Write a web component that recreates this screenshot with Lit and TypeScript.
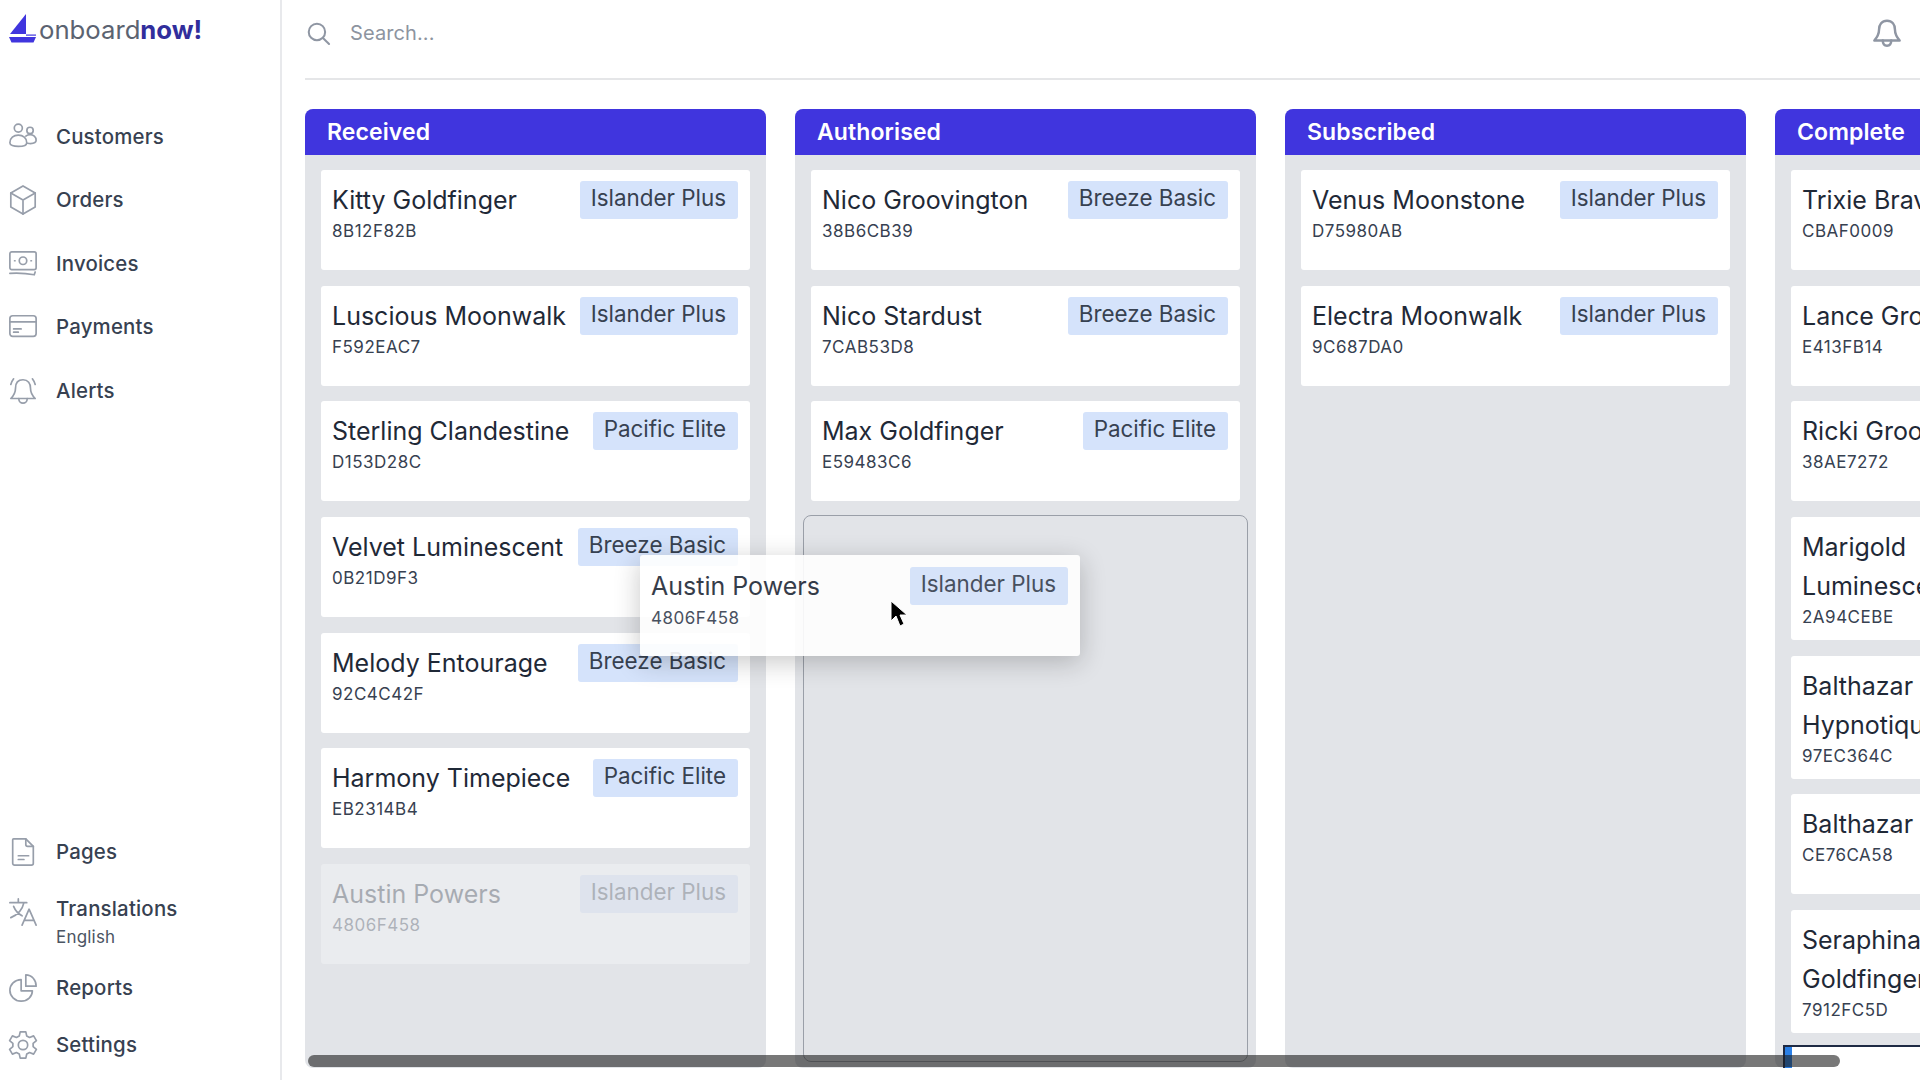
import { LitElement, html, css, svg } from 'lit';
import { customElement } from 'lit/decorators.js';

interface Card {
  name: string;
  id: string;
  plan: string;
  ghost?: boolean;
}

interface Column {
  title: string;
  cards: Card[];
  dropzone?: boolean;
}

const ISLANDER = 'Islander Plus';
const BREEZE = 'Breeze Basic';
const PACIFIC = 'Pacific Elite';

const COLUMNS: Column[] = [
  {
    title: 'Received',
    cards: [
      { name: 'Kitty Goldfinger', id: '8B12F82B', plan: ISLANDER },
      { name: 'Luscious Moonwalk', id: 'F592EAC7', plan: ISLANDER },
      { name: 'Sterling Clandestine', id: 'D153D28C', plan: PACIFIC },
      { name: 'Velvet Luminescent', id: '0B21D9F3', plan: BREEZE },
      { name: 'Melody Entourage', id: '92C4C42F', plan: BREEZE },
      { name: 'Harmony Timepiece', id: 'EB2314B4', plan: PACIFIC },
      { name: 'Austin Powers', id: '4806F458', plan: ISLANDER, ghost: true },
    ],
  },
  {
    title: 'Authorised',
    dropzone: true,
    cards: [
      { name: 'Nico Groovington', id: '38B6CB39', plan: BREEZE },
      { name: 'Nico Stardust', id: '7CAB53D8', plan: BREEZE },
      { name: 'Max Goldfinger', id: 'E59483C6', plan: PACIFIC },
    ],
  },
  {
    title: 'Subscribed',
    cards: [
      { name: 'Venus Moonstone', id: 'D75980AB', plan: ISLANDER },
      { name: 'Electra Moonwalk', id: '9C687DA0', plan: ISLANDER },
    ],
  },
  {
    title: 'Complete',
    cards: [
      { name: 'Trixie Bravo', id: 'CBAF0009', plan: ISLANDER },
      { name: 'Lance Groovington', id: 'E413FB14', plan: ISLANDER },
      { name: 'Ricki Groovington', id: '38AE7272', plan: ISLANDER },
      { name: 'Marigold Luminescent', id: '2A94CEBE', plan: ISLANDER },
      { name: 'Balthazar Hypnotique', id: '97EC364C', plan: ISLANDER },
      { name: 'Balthazar Bravo', id: 'CE76CA58', plan: ISLANDER },
      { name: 'Seraphina Goldfinger', id: '7912FC5D', plan: ISLANDER },
    ],
  },
];

const ICONS = {
  customers: svg`<circle cx="11" cy="6.5" r="4.3"/><circle cx="23.5" cy="9" r="3.4"/><path d="M2 22c0-5 4-8 9-8s9 3 9 8c0 3-4 4-9 4s-9-1-9-4z"/><path d="M19 15c1.300-1 3-1.500 4.500-1.500 3.500 0 6.500 2.500 6.500 6 0 2.500-2.500 3.500-6 3.500-1 0-2-.1-3-.3"/>`,
  orders: svg`<path d="M16 1l13 7.500v15L16 31 3 23.500v-15z"/><path d="M3 8.500l13 7.500 13-7.500M16 16v15"/>`,
  invoices: svg`<rect x="2" y="3" width="28" height="19" rx="2"/><circle cx="16" cy="12.500" r="4"/><path d="M7 12.500h.5M24.500 12.500h.5M2 26c8-.5 18 0 26 1.500l1-3"/>`,
  payments: svg`<rect x="2" y="4" width="28" height="22" rx="3"/><path d="M2 10.500h28M6 18h8M6 21.500h5"/>`,
  alerts: svg`<path d="M16 4c-5.500 0-8 4-8 9 0 5-2 8-5 11h26c-3-3-5-6-5-11 0-5-2.500-9-8-9z"/><path d="M11.500 24c0 3 2 5 4.500 5s4.500-2 4.500-5M3 9c.5-2 1.500-4 3-6M29 9c-.5-2-1.500-4-3-6"/>`,
  pages: svg`<path d="M6 2h13l8 8v18a2 2 0 0 1-2 2H7a2 2 0 0 1-2-2V3a1 1 0 0 1 1-1z"/><path d="M19 2v6a2 2 0 0 0 2 2h6M11 20h11M11 24h6"/>`,
  translations: svg`<path d="M2 6h18M11 2v4M17 6c-1.500 7-6.500 13-14 16M6 10c2 5 5 8 9 10"/><path d="M15 30l7.500-17L30 30M17.500 25h10"/>`,
  reports: svg`<path d="M14 7C7 7 2 12.500 2 18.500S7 30 14 30s12-5 12-11H14z"/><path d="M19 2v12h11C30 7.500 25.500 2 19 2z"/>`,
  settings: svg`<circle cx="16" cy="16" r="5"/><path d="M13 2h6l1 4.500 3 1.500 4.300-1.700 3 5-3.500 3v3.400l3.500 3-3 5-4.300-1.700-3 1.500-1 4.500h-6l-1-4.500-3-1.500-4.300 1.700-3-5 3.500-3v-3.400l-3.500-3 3-5L9 8l3-1.500z"/>`,
  bell: svg`<path d="M16 3c-5.500 0-8.500 4-8.500 9.500 0 5-2 8-5 11.500h27c-3-3.500-5-6.500-5-11.500C24.500 7 21.500 3 16 3z"/><path d="M11.500 24c0 3.500 2 5.500 4.500 5.500s4.500-2 4.500-5.500"/>`,
  search: svg`<circle cx="14" cy="14" r="10.500"/><path d="M22 22l7.500 7.500"/>`,
};

@customElement('app-root')
export class AppRoot extends LitElement {
  static styles = css`
    :host {
      display: block;
      width: 1920px;
      height: 1080px;
      overflow: hidden;
      position: relative;
      background: #fff;
      font-family: Inter, 'Liberation Sans', sans-serif;
      color: #1f2937;
    }
    .shell {
      display: flex;
      height: 100%;
    }

    /* sidebar */
    .sidebar {
      width: 282px;
      flex: none;
      box-sizing: border-box;
      border-right: 2px solid #e8e9ec;
      display: flex;
      flex-direction: column;
      padding: 13px 0 0 8px;
    }
    .logo {
      display: flex;
      align-items: center;
      height: 32px;
      font-size: 25.700px;
      color: #5b6371;
    }
    .logo svg {
      width: 30px;
      height: 32px;
      flex: none;
      margin-right: 1px;
    }
    .logo b {
      font-weight: 700;
      color: #312e9c;
    }
    .nav {
      display: flex;
      flex-direction: column;
    }
    .nav.top {
      margin-top: 60px;
    }
    .nav.bottom {
      margin-top: auto;
      padding-bottom: 6px;
    }
    .item {
      display: flex;
      align-items: center;
      height: 63.500px;
    }
    .nav.bottom .item {
      height: 57.500px;
    }
    .item svg {
      width: 30px;
      height: 30px;
      flex: none;
      fill: none;
      stroke: #979eaa;
      stroke-width: 1.800;
      stroke-linecap: round;
      stroke-linejoin: round;
    }
    .item span {
      margin-left: 18px;
      font-size: 20.400px;
      line-height: 24px;
      font-weight: 500;
      color: #374151;
      letter-spacing: 0.2px;
    }
    .nav.bottom .item.sub {
      height: 78px;
      align-items: flex-start;
      padding-top: 16px;
      box-sizing: border-box;
    }
    .item.sub div {
      margin-left: 18px;
    }
    .item.sub span {
      display: block;
      margin: 0;
    }
    .item.sub small {
      display: block;
      margin-top: 6px;
      font-size: 17px;
      line-height: 20px;
      color: #4b5563;
      letter-spacing: 0.2px;
    }

    /* main */
    .main {
      flex: 1;
      min-width: 0;
      padding-left: 23px;
      overflow: hidden;
    }
    .topbar {
      height: 80px;
      box-sizing: border-box;
      border-bottom: 2px solid #e5e6e8;
      display: flex;
      align-items: center;
      padding: 0 18px 12px 1px;
    }
    .topbar svg {
      flex: none;
      fill: none;
      stroke: #8f96a3;
      stroke-width: 2.600;
      stroke-linecap: round;
      stroke-linejoin: round;
    }
    .topbar .search-icon {
      width: 25px;
      height: 25px;
    }
    .topbar .bell {
      width: 30px;
      height: 30px;
    }
    .search {
      flex: 1;
      margin-left: 19px;
      font-size: 20px;
      color: #8d94a0;
      letter-spacing: 0.1px;
    }
    .board {
      display: flex;
      gap: 29px;
      margin-top: 29px;
      height: 959px;
      width: 1800px;
    }
    .column {
      width: 461px;
      flex: none;
      background: #e2e4e8;
      border-radius: 8px;
      display: flex;
      flex-direction: column;
      overflow: hidden;
    }
    .head {
      height: 46px;
      flex: none;
      background: #4035de;
      color: #fff;
      font-size: 23px;
      font-weight: 600;
      line-height: 46px;
      padding-left: 22px;
      letter-spacing: 0.1px;
    }
    .cards {
      display: flex;
      flex-direction: column;
      gap: 15.700px;
      padding: 15px 16px 0;
    }
    .card {
      background: #fff;
      border-radius: 3px;
      padding: 11px 12px 12px 11px;
      display: flex;
      justify-content: space-between;
      align-items: flex-start;
      gap: 8px;
      min-height: 100px;
      box-sizing: border-box;
      flex: none;
    }
    .card.ghost {
      opacity: 0.3;
    }
    .name {
      font-size: 25px;
      line-height: 39px;
      color: #1f2937;
    }
    .id {
      font-size: 17px;
      line-height: 21px;
      margin-top: 1px;
      color: #374151;
      letter-spacing: 0.5px;
    }
    .badge {
      flex: none;
      height: 38px;
      line-height: 34px;
      padding: 0 12px 0 11px;
      background: #d5e3fb;
      border-radius: 3px;
      font-size: 22.400px;
      color: #374151;
    }
    .dropzone {
      margin: 14px 8px 6px;
      flex: 1;
      border: 1.500px solid #9a9fa8;
      border-radius: 8px;
    }

    /* overlays */
    .dragged {
      position: absolute;
      left: 640px;
      top: 555px;
      width: 440px;
      min-height: 101px;
      padding-top: 12px;
      opacity: 0.9;
      box-shadow: 0 6px 26px rgba(0, 0, 0, 0.24);
    }
    .dragged .id {
      margin-top: 2px;
    }
    .cursor {
      position: absolute;
      left: 890px;
      top: 600px;
      width: 18px;
      height: 28px;
    }
    .clipped {
      position: absolute;
      left: 1783px;
      top: 1045px;
      width: 137px;
      height: 23px;
      box-sizing: border-box;
      background: #fff;
      border-top: 2px solid #1e2a44;
    }
    .clipped i {
      display: block;
      width: 7px;
      height: 100%;
      background: #2a7fe6;
      border-left: 2px solid #1e2a44;
    }
    .scrollbar {
      position: absolute;
      left: 308px;
      top: 1055px;
      width: 1532px;
      height: 12px;
      border-radius: 6px;
      background: rgba(30, 30, 30, 0.6);
    }
  `;

  private renderCard(card: Card, dragged = false) {
    const cls = `card${card.ghost ? ' ghost' : ''}${dragged ? ' dragged' : ''}`;
    return html`<div class=${cls}>
      <div>
        <div class="name">${card.name}</div>
        <div class="id">${card.id}</div>
      </div>
      <div class="badge">${card.plan}</div>
    </div>`;
  }

  private navItem(icon: keyof typeof ICONS, label: string) {
    return html`<div class="item">
      <svg viewBox="0 0 32 32">${ICONS[icon]}</svg>
      <span>${label}</span>
    </div>`;
  }

  render() {
    return html`<div class="shell">
        <aside class="sidebar">
          <div class="logo">
            <svg viewBox="0 0 30 32">
              <path d="M2 21L18 1v20z" fill="#4035de" />
              <path d="M18 21.500h10v1.200H18z" fill="#4035de" />
              <path d="M1 24h27l-2.500 5.500h-22z" fill="#4035de" />
            </svg>
            <span>onboard<b>now!</b></span>
          </div>
          <nav class="nav top">
            ${this.navItem('customers', 'Customers')} ${this.navItem('orders', 'Orders')}
            ${this.navItem('invoices', 'Invoices')} ${this.navItem('payments', 'Payments')}
            ${this.navItem('alerts', 'Alerts')}
          </nav>
          <nav class="nav bottom">
            ${this.navItem('pages', 'Pages')}
            <div class="item sub">
              <svg viewBox="0 0 32 32">${ICONS.translations}</svg>
              <div><span>Translations</span><small>English</small></div>
            </div>
            ${this.navItem('reports', 'Reports')} ${this.navItem('settings', 'Settings')}
          </nav>
        </aside>
        <main class="main">
          <div class="topbar">
            <svg class="search-icon" viewBox="0 0 32 32">${ICONS.search}</svg>
            <div class="search">Search...</div>
            <svg class="bell" viewBox="0 0 32 32">${ICONS.bell}</svg>
          </div>
          <div class="board">
            ${COLUMNS.map(
              (col) => html`<section class="column">
                <div class="head">${col.title}</div>
                <div class="cards">${col.cards.map((c) => this.renderCard(c))}</div>
                ${col.dropzone ? html`<div class="dropzone"></div>` : ''}
              </section>`,
            )}
          </div>
        </main>
      </div>
      <div class="clipped"><i></i></div>
      ${this.renderCard({ name: 'Austin Powers', id: '4806F458', plan: ISLANDER }, true)}
      <svg class="cursor" viewBox="0 0 18 28">
        <path d="M1 1v20l5-5 4 10 4-2-4-9h7z" fill="#000" stroke="#fff" stroke-width="1" />
      </svg>
      <div class="scrollbar"></div>`;
  }
}
